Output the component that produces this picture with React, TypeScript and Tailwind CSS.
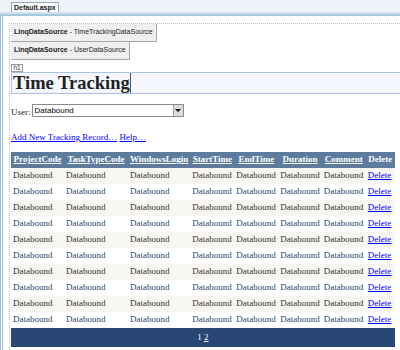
import React from 'react'

const cols = [
  { name: 'ProjectCode', w: 53 },
  { name: 'TaskTypeCode', w: 64 },
  { name: 'WindowsLogin', w: 62 },
  { name: 'StartTime', w: 44 },
  { name: 'EndTime', w: 44 },
  { name: 'Duration', w: 43 },
  { name: 'Comment', w: 44 },
  { name: 'Delete', w: 29 },
]

const rows = Array.from({ length: 10 }, (_, i) => i)

function DataSourceBox({ name }: { name: string }) {
  return (
    <div className="w-fit h-[18px] flex items-center pl-[3px] pr-[3px] bg-[#efefef] border-r border-b border-[#a7a7a7] text-[7px] text-[#222] whitespace-nowrap">
      <span className="font-bold">LinqDataSource</span>
      <span>&nbsp;- {name}</span>
    </div>
  )
}

export default function App() {
  return (
    <div className="w-[400px] h-[350px] overflow-hidden bg-white flex flex-col" style={{ fontFamily: '"Liberation Sans", Arial, sans-serif' }}>
      {/* tab strip */}
      <div className="h-[12px] bg-[#eef2f9] flex items-end pl-[11px]">
        <div className="h-[10px] px-[2px] bg-[#fbfcfd] border border-b-0 border-[#9aa7b6] text-[7px] font-bold text-[#1a1a1a] leading-[9px]">Default.aspx</div>
      </div>
      <div className="h-[2px] bg-[#cfe0ee]" />
      <div className="h-[2px] bg-[#a6c8df]" />

      <div className="flex-1 flex">
        <div className="w-[4px] border-l-[3px] border-double border-[#9dbcd8]" />
        <div className="flex-1 pl-[5px] pt-[7px]">
          <div className="h-full border-t border-l border-dotted border-[#bdbdbd] pl-[1px] text-[#222]" style={{ fontFamily: '"Liberation Serif", "Times New Roman", serif' }}>
            <div style={{ fontFamily: '"Liberation Sans", Arial, sans-serif' }}>
              <DataSourceBox name="TimeTrackingDataSource" />
              <DataSourceBox name="UserDataSource" />
            </div>

            <div className="mt-[4px] w-[12px] h-[8px] border border-[#9a9a9a] bg-white text-[6.5px] leading-[6px] text-center text-[#333]" style={{ fontFamily: '"Liberation Sans", Arial, sans-serif' }}>h1</div>

            <div className="h-[22px] border-y border-l border-[#a8c2ea] bg-[#f4f8fe] flex items-stretch">
              <h1 className="pl-[1px] text-[18.5px] font-bold leading-[20px] text-[#222] border-r border-[#555]">Time Tracking</h1>
            </div>

            <div className="mt-[10px] flex items-end h-[13px]">
              <span className="text-[9px] leading-[10px] pr-[1px]">User:</span>
              <div className="w-[152px] h-[13px] border border-[#8a8a8a] bg-white flex items-center">
                <span className="flex-1 pl-[2px] text-[8px] text-black" style={{ fontFamily: '"Liberation Sans", Arial, sans-serif' }}>Databound</span>
                <div className="w-[10px] h-full bg-[#dcdcdc] border-l border-[#a0a0a0] flex flex-col items-center justify-center">
                  <div className="w-0 h-0 border-l-[3px] border-r-[3px] border-t-[3px] border-l-transparent border-r-transparent border-t-black" />
                </div>
              </div>
            </div>

            <div className="mt-[14px] text-[9px] leading-[12px] text-[#0000ff]">
              <span className="underline">Add New Tracking Record…</span>{' '}
              <span className="underline">Help…</span>
            </div>

            <table className="mt-[9px] border-collapse text-[9px] table-fixed">
              <thead>
                <tr className="h-[16px] bg-[#5d7b9d] text-white">
                  {cols.map((c) => (
                    <th key={c.name} className="px-[2px] font-bold text-center whitespace-nowrap p-0" style={{ width: c.w }}>
                      <span className={c.name === 'Delete' ? '' : 'underline'}>{c.name}</span>
                    </th>
                  ))}
                </tr>
              </thead>
              <tbody>
                {rows.map((r) => (
                  <tr key={r} className={r % 2 === 0 ? 'h-[16px] bg-[#f7f6f3] text-[#333333]' : 'h-[16px] bg-white text-[#284775]'}>
                    {cols.slice(0, 7).map((c) => (
                      <td key={c.name} className="px-[2px] py-0 whitespace-nowrap">Databound</td>
                    ))}
                    <td className="px-[2px] py-0 whitespace-nowrap">
                      <span className="text-[#0000ff] underline">Delete</span>
                    </td>
                  </tr>
                ))}
                <tr className="h-[19px] bg-[#284775] text-white">
                  <td colSpan={8} className="text-center">
                    <span>1</span> <span className="underline">2</span>
                  </td>
                </tr>
              </tbody>
            </table>
          </div>
        </div>
      </div>
    </div>
  )
}
